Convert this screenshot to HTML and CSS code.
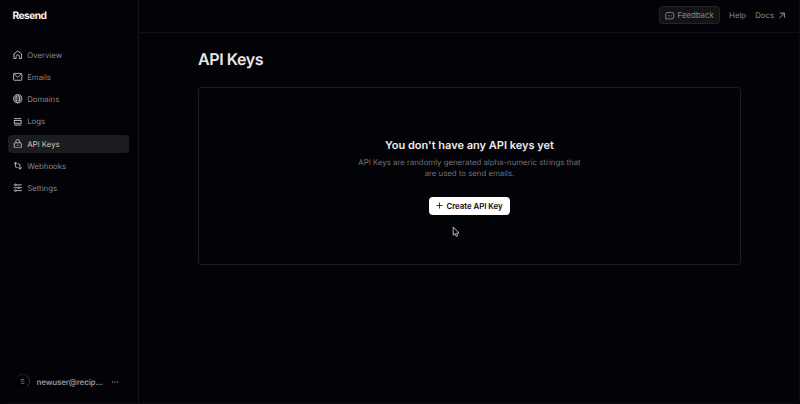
FILE: index.html
```html
<!DOCTYPE html>
<html lang="en">
<head>
<meta charset="utf-8">
<title>API Keys · Resend</title>
<link rel="stylesheet" href="styles.css">
</head>
<body>
<div class="app">
  <aside class="sidebar">
    <div class="brand">Resend</div>
    <nav class="nav">
      <a class="nav-item"><svg class="icon" viewBox="0 0 10 10"><path d="M1 5V4.100L5 1l4 3.100V9H6.700V6.800a1.700 1.700 0 0 0-3.400 0V9H1V4.500"/></svg><span>Overview</span></a>
      <a class="nav-item"><svg class="icon" viewBox="0 0 10 10"><rect x=".7" y="1.500" width="8.600" height="7.200" rx=".5"/><path d="m1.200 2.300 3.800 3.200 3.800-3.200"/></svg><span>Emails</span></a>
      <a class="nav-item"><svg class="icon" viewBox="0 0 10 10"><circle cx="5" cy="5" r="4.300"/><ellipse cx="5" cy="5" rx="1.900" ry="4.300"/><path d="M.9 5h8.200M1.500 3h7M1.500 7h7" stroke-width=".7"/></svg><span>Domains</span></a>
      <a class="nav-item"><svg class="icon" viewBox="0 0 10 10"><path d="M1.200 1.700h7.600M1.200 8.500h7.600"/><rect x="1.400" y="3.600" width="7.200" height="3"/></svg><span>Logs</span></a>
      <a class="nav-item active"><svg class="icon" viewBox="0 0 10 10"><rect x="1.300" y="4" width="7.400" height="5.400" rx=".8"/><path d="M2.900 4V2.700a2.100 2.100 0 0 1 4.200 0V4M5 6v1.500"/></svg><span>API Keys</span></a>
      <a class="nav-item"><svg class="icon" viewBox="0 0 10 10"><path d="M.7 3.300 2.700 1.300l2 2M2.700 1.500V6q0 .8.800.8h1.200M9.300 6.700l-2 2-2-2M7.300 8.500V4q0-.8-.8-.8H5.300"/></svg><span>Webhooks</span></a>
      <a class="nav-item"><svg class="icon" viewBox="0 0 10 10"><path d="M.7 2h1.200M3.700 2h5.600M.7 5h4.500M7 5h2.300M.7 8h1.200M3.700 8h5.600"/><circle cx="2.800" cy="2" r=".9"/><circle cx="6.100" cy="5" r=".9"/><circle cx="2.800" cy="8" r=".9"/></svg><span>Settings</span></a>
    </nav>
    <div class="account">
      <span class="avatar">S</span>
      <span class="email">newuser@recip...</span>
      <svg class="more" viewBox="0 0 8 4"><circle cx="1.500" cy="2" r=".7"/><circle cx="4" cy="2" r=".7"/><circle cx="6.500" cy="2" r=".7"/></svg>
    </div>
  </aside>
  <main class="main">
    <header class="topbar">
      <button class="feedback"><svg class="icon" viewBox="0 0 10 10"><path d="M3 1.500h4a2.300 2.300 0 0 1 2.300 2.100v2.300A2.300 2.300 0 0 1 7 8.200H3.500L1 8.600.7 6V3.600A2.300 2.300 0 0 1 3 1.500Z"/><path d="M2.800 5h.8M4.600 5h.8M6.400 5h.8"/></svg>Feedback</button>
      <a class="help">Help</a>
      <a class="docs">Docs<svg class="arrow" viewBox="0 0 8 8"><path d="m1.200 6.800 5.400-5.400M2 1.200h4.800V6"/></svg></a>
    </header>
    <section class="content">
      <h1>API Keys</h1>
      <div class="empty">
        <h2>You don't have any API keys yet</h2>
        <p>API Keys are randomly generated alpha-numeric strings that<br>are used to send emails.</p>
        <button class="create"><svg class="plus" viewBox="0 0 8 8"><path d="M4 .5v7M.5 4h7"/></svg>Create API Key</button>
      </div>
    </section>
  </main>
  <svg class="cursor" viewBox="0 0 8 12"><path d="M1.200 1v8.300l1.900-1.700 1.200 2.800 1.500-.7-1.200-2.600 2.500-.2Z"/></svg>
</div>
</body>
</html>
```
FILE: styles.css
```css
* { box-sizing: border-box; }
body {
  margin: 0;
  background: #020207;
  color: #85868b;
  font-family: Inter, sans-serif;
  font-size: 7.800px;
  text-rendering: geometricPrecision;
}
h1, h2, p { margin: 0; }
button { font: inherit; letter-spacing: inherit; border: 0; }
svg { flex: none; fill: none; stroke: currentColor; }
.app {
  position: relative;
  display: flex;
  width: 800px;
  height: 404px;
  overflow: hidden;
  border: solid #0c0c10;
  border-width: 0 1px 1px 0;
  border-radius: 0 0 6px 6px;
}
.sidebar {
  display: flex;
  flex-direction: column;
  width: 139px;
  padding: 9px 9px 12.600px 8px;
  border-right: 1px solid #15161b;
}
.brand {
  height: 14px;
  margin-left: 4.500px;
  color: #f4f4f5;
  font-size: 10.200px;
  font-weight: 700;
  line-height: 14px;
  letter-spacing: -.55px;
}
.nav { display: grid; gap: 4.250px; margin-top: 22.500px; }
.nav-item {
  display: flex;
  align-items: center;
  gap: 4.700px;
  height: 18px;
  padding-left: 5px;
  border-radius: 4px;
}
.icon { width: 9.500px; height: 9.500px; stroke-width: 1; }
.nav-item .icon { color: #bcbdc1; }
.nav-item.active { background: #1b1c20; color: #c5c6c9; }
.account { display: flex; align-items: center; height: 17px; margin: auto 0 0 7px; }
.avatar {
  width: 15px;
  height: 15px;
  border: 1px solid #08080b;
  border-top-color: #1e1f23;
  border-right-color: #303136;
  border-radius: 50%;
  background: #000;
  font-size: 7px;
  line-height: 13px;
  text-align: center;
}
.email { width: 67px; margin-left: 6.500px; color: #919297; font-size: 8px; font-weight: 600; letter-spacing: -.15px; white-space: nowrap; }
.more { width: 8px; height: 4px; margin-left: 7.500px; fill: currentColor; stroke: none; }
.main { flex: 1; min-width: 0; }
.topbar {
  display: flex;
  align-items: center;
  justify-content: flex-end;
  height: 32.500px;
  padding: 0 13.500px 1px 0;
  border-bottom: 1px solid #111217;
}
.feedback {
  display: flex;
  align-items: center;
  gap: 3px;
  width: 61px;
  height: 18px;
  padding: 0 0 0 5px;
  border: 1px solid #242529;
  border-radius: 4px;
  background: #121317;
  color: #85868a;
}
.help { margin-left: 9px; }
.docs { display: flex; align-items: center; gap: 4px; margin-left: 9px; }
.arrow { width: 7.500px; height: 7.500px; color: #a0a1a5; }
.content { width: 543px; margin: 15.500px 0 0 59px; }
h1 { color: #e8e8e9; font-size: 16px; font-weight: 600; line-height: 22px; letter-spacing: -.4px; }
.empty {
  display: flex;
  flex-direction: column;
  align-items: center;
  height: 178px;
  margin-top: 17px;
  padding-top: 49.500px;
  border: 1px solid #1e1f24;
  border-radius: 4px;
}
h2 { color: #ededee; font-size: 11px; font-weight: 600; line-height: 14px; letter-spacing: 0; }
.empty p { margin-top: 5px; color: #73747a; line-height: 11px; text-align: center; white-space: nowrap; }
.create {
  display: flex;
  align-items: center;
  justify-content: center;
  gap: 3px;
  width: 81px;
  height: 18px;
  margin-top: 18px;
  padding: 0;
  border-radius: 4px;
  background: #fff;
  color: #09090b;
  font-weight: 600;
  white-space: nowrap;
}
.plus { width: 7px; height: 7px; stroke-width: .9; }
.cursor {
  position: absolute;
  left: 452px;
  top: 226px;
  width: 8px;
  height: 12px;
  fill: #050508;
  stroke: #c8c8ca;
  stroke-width: .9;
}
```
